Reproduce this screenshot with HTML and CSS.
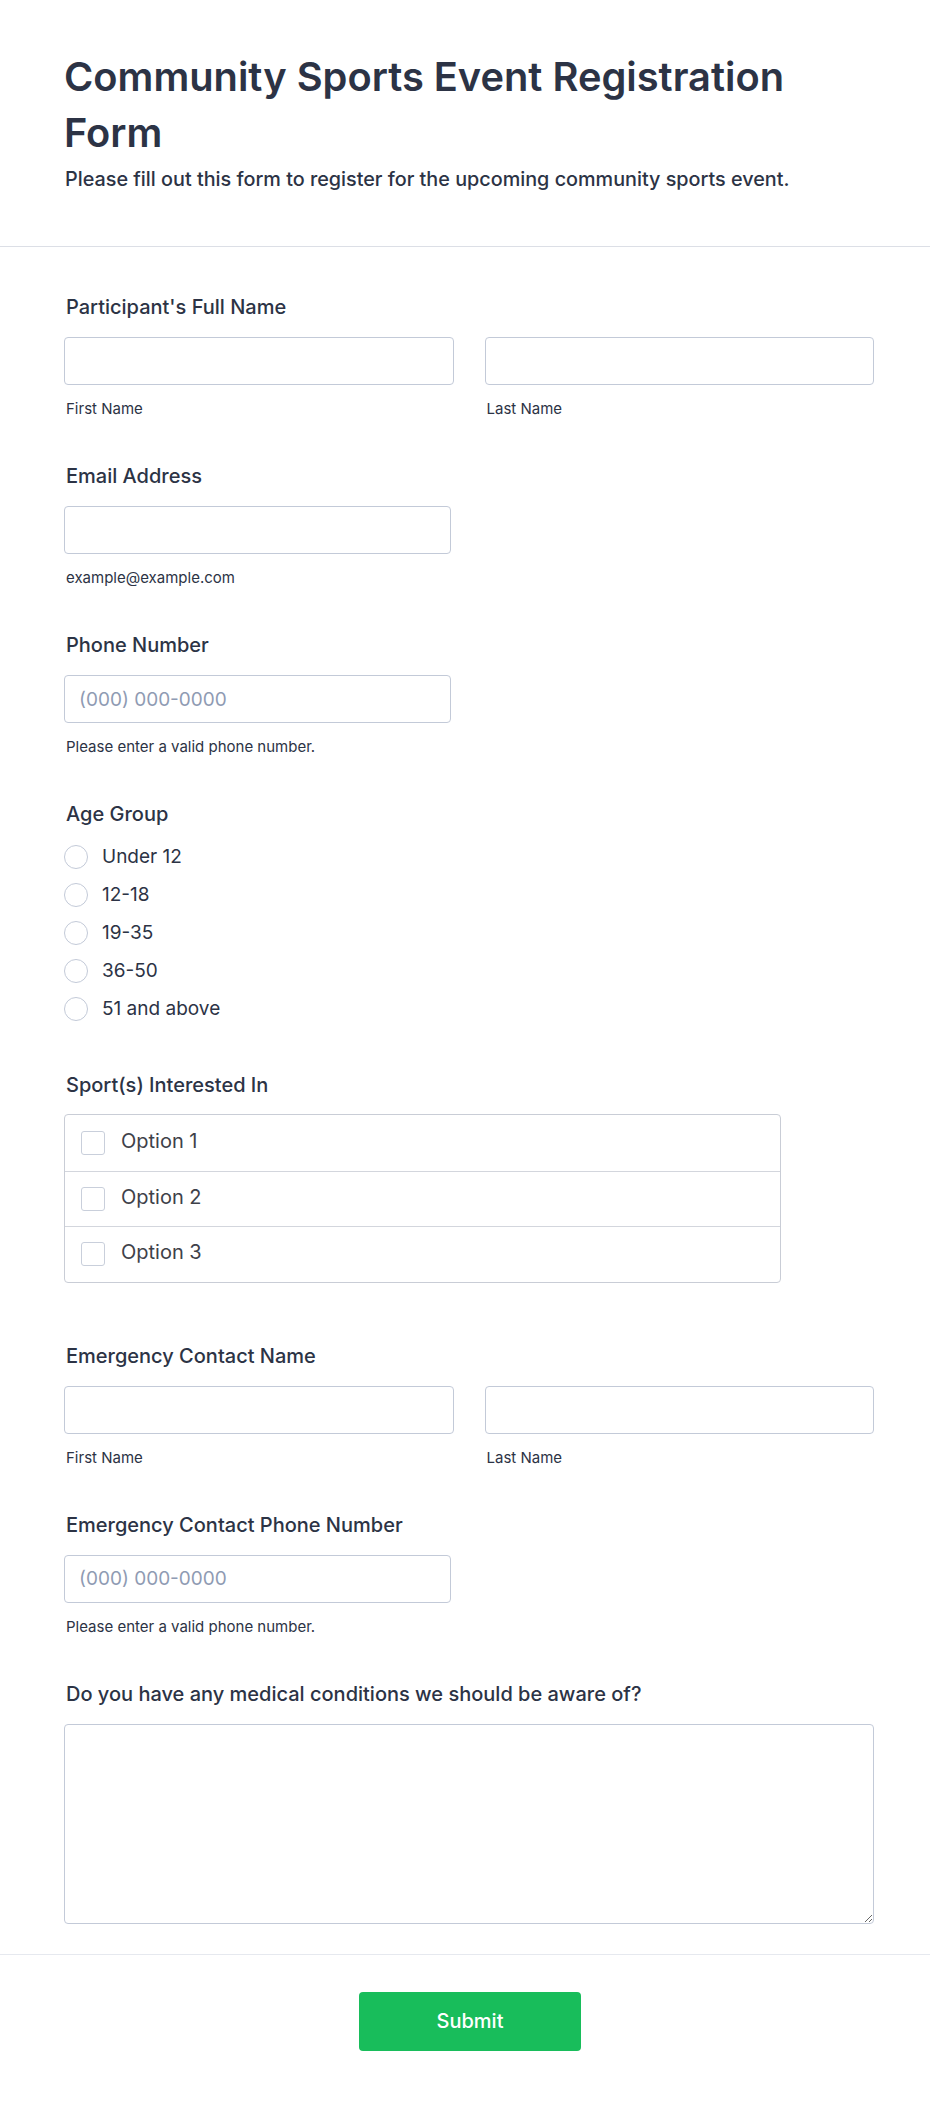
FILE: index.html
```html
<!DOCTYPE html>
<html lang="en">
<head>
<meta charset="utf-8">
<title>Community Sports Event Registration Form</title>
<link rel="stylesheet" href="styles.css">
</head>
<body>
<form class="form">
  <header class="form-header">
    <h1 class="form-title">Community Sports Event Registration Form</h1>
    <p class="form-subtitle">Please fill out this form to register for the upcoming community sports event.</p>
  </header>

  <section class="form-body">
    <div class="field">
      <label class="field-label">Participant's Full Name</label>
      <div class="name-row">
        <div class="name-col">
          <input class="text-input" type="text">
          <span class="sublabel">First Name</span>
        </div>
        <div class="name-col">
          <input class="text-input" type="text">
          <span class="sublabel">Last Name</span>
        </div>
      </div>
    </div>

    <div class="field">
      <label class="field-label">Email Address</label>
      <input class="text-input short" type="email">
      <span class="sublabel">example@example.com</span>
    </div>

    <div class="field">
      <label class="field-label">Phone Number</label>
      <input class="text-input short" type="tel" placeholder="(000) 000-0000">
      <span class="sublabel">Please enter a valid phone number.</span>
    </div>

    <div class="field">
      <label class="field-label">Age Group</label>
      <div class="radio-list">
        <label class="radio-row"><span class="radio"></span><span class="radio-text">Under 12</span></label>
        <label class="radio-row"><span class="radio"></span><span class="radio-text">12-18</span></label>
        <label class="radio-row"><span class="radio"></span><span class="radio-text">19-35</span></label>
        <label class="radio-row"><span class="radio"></span><span class="radio-text">36-50</span></label>
        <label class="radio-row"><span class="radio"></span><span class="radio-text">51 and above</span></label>
      </div>
    </div>

    <div class="field field-checks">
      <label class="field-label">Sport(s) Interested In</label>
      <div class="check-box">
        <label class="check-row"><span class="check"></span><span class="check-text">Option 1</span></label>
        <label class="check-row"><span class="check"></span><span class="check-text">Option 2</span></label>
        <label class="check-row"><span class="check"></span><span class="check-text">Option 3</span></label>
      </div>
    </div>

    <div class="field">
      <label class="field-label">Emergency Contact Name</label>
      <div class="name-row">
        <div class="name-col">
          <input class="text-input" type="text">
          <span class="sublabel">First Name</span>
        </div>
        <div class="name-col">
          <input class="text-input" type="text">
          <span class="sublabel">Last Name</span>
        </div>
      </div>
    </div>

    <div class="field">
      <label class="field-label">Emergency Contact Phone Number</label>
      <input class="text-input short" type="tel" placeholder="(000) 000-0000">
      <span class="sublabel">Please enter a valid phone number.</span>
    </div>

    <div class="field">
      <label class="field-label">Do you have any medical conditions we should be aware of?</label>
      <textarea class="text-area"></textarea>
    </div>
  </section>

  <footer class="form-footer">
    <button class="submit-btn" type="button">Submit</button>
  </footer>
</form>
</body>
</html>
```

FILE: styles.css
```css
* {
  box-sizing: border-box;
}

html, body {
  margin: 0;
  padding: 0;
  background: #ffffff;
}

body {
  font-family: Inter, "Noto Sans", "Liberation Sans", sans-serif;
  color: #2c3345;
}

.form {
  width: 930px;
  display: flex;
  flex-direction: column;
}

.form-header {
  padding: 49px 64px 55px 64px;
  border-bottom: 1px solid #dcdfe6;
}

.form-title {
  margin: 0;
  font-size: 39.8px;
  line-height: 56px;
  font-weight: 600;
  color: #2c3345;
}

.form-subtitle {
  margin: 6px 0 0 1px;
  font-size: 19.8px;
  line-height: 24px;
  font-weight: 500;
  color: #2c3345;
}

.form-body {
  padding: 48px 56px 30px 64px;
  display: flex;
  flex-direction: column;
  gap: 45px;
}

.field {
  display: flex;
  flex-direction: column;
  align-items: flex-start;
}

.field-label {
  display: block;
  font-size: 20px;
  line-height: 24px;
  font-weight: 500;
  color: #2c3345;
  padding-left: 2px;
  margin-bottom: 18px;
}

.name-row {
  display: flex;
  gap: 31px;
  width: 810px;
}

.name-col {
  flex: 1;
  display: flex;
  flex-direction: column;
}

.text-input {
  width: 100%;
  height: 48px;
  border: 1px solid #c3cad8;
  border-radius: 4px;
  padding: 0 14px;
  font-family: inherit;
  font-size: 19px;
  color: #2c3345;
  background: #fff;
  outline: none;
}

.text-input.short {
  width: 387px;
}

.text-input::placeholder {
  color: #8f9bb3;
}

.sublabel {
  display: block;
  margin-top: 14px;
  padding-left: 2px;
  font-size: 15px;
  line-height: 20px;
  color: #2c3345;
}

.radio-list {
  display: flex;
  flex-direction: column;
  margin-top: -6px;
}

.radio-row {
  display: flex;
  align-items: center;
  height: 38px;
  gap: 14px;
}

.radio {
  width: 24px;
  height: 24px;
  border: 1.5px solid #c3cad8;
  border-radius: 50%;
  background: #fff;
  flex: none;
}

.radio-text {
  font-size: 19px;
  line-height: 24px;
  color: #2c3345;
}

.field-checks {
  margin-bottom: 16px;
}

.field-checks .field-label {
  margin-bottom: 17px;
}

.check-box {
  width: 717px;
  border: 1px solid #c9cdd6;
  border-radius: 4px;
  display: flex;
  flex-direction: column;
}

.check-row {
  display: flex;
  align-items: center;
  height: 55.5px;
  padding-left: 16px;
  gap: 16px;
  border-top: 1px solid #d3d6dd;
}

.check-row:first-child {
  border-top: none;
}

.check {
  width: 24px;
  height: 24px;
  border: 1px solid #c9cfdb;
  border-radius: 3px;
  background: #fff;
  flex: none;
}

.check-text {
  font-size: 20px;
  line-height: 24px;
  color: #3e4149;
  margin-top: -4px;
}

.text-area {
  width: 810px;
  height: 200px;
  border: 1px solid #c3cad8;
  border-radius: 4px;
  padding: 12px 14px;
  font-family: inherit;
  font-size: 18px;
  color: #2c3345;
  resize: vertical;
  outline: none;
}

.form-footer {
  border-top: 1px solid #e6e9ef;
  padding: 37px 0 50px 10px;
  display: flex;
  justify-content: center;
}

.submit-btn {
  width: 222px;
  height: 59px;
  border: none;
  border-radius: 4px;
  background: #18bd5b;
  color: #ffffff;
  font-family: inherit;
  font-size: 20px;
  font-weight: 500;
  cursor: pointer;
}
```
